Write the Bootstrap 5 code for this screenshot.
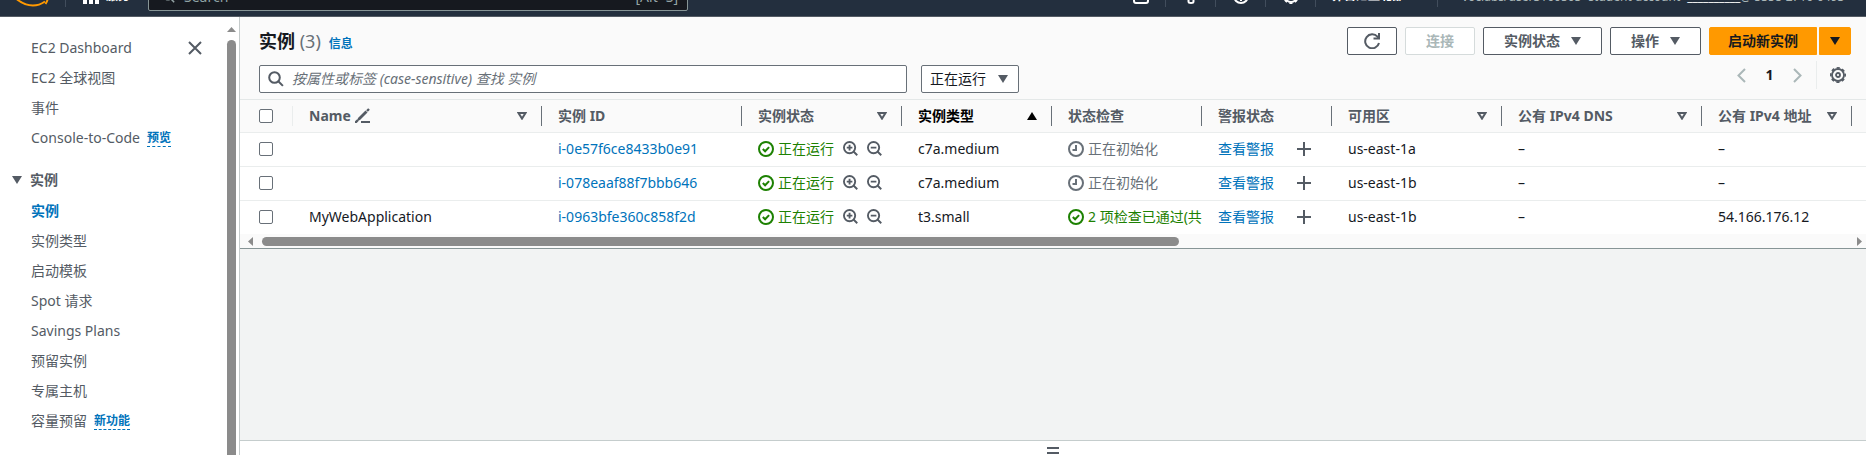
<!DOCTYPE html>
<html lang="zh-CN">
<head>
<meta charset="utf-8">
<meta name="viewport" content="width=device-width, initial-scale=1">
<title>实例 | EC2</title>
<link href="https://cdn.jsdelivr.net/npm/bootstrap@5.3.0/dist/css/bootstrap.min.css" rel="stylesheet">
<style>
:root{--ink:#16191f;--muted:#545b64;--soft:#687078;--blue:#0073bb;--line:#eaeded;--green:#1d8102}
body{font-family:"Noto Sans","Noto Sans CJK SC",sans-serif;font-size:14px;line-height:20px;color:var(--ink);background:#f2f3f3}
a{color:var(--blue);text-decoration:none}
svg{display:block;flex:none}
.topbar{height:17px;background:#232f3e;border-bottom:1px solid #545b64;color:#fff;font-size:12px;line-height:16px}
.topbar button,.bare{background:none;border:0;padding:0;color:inherit}
.tb-logo{width:65px;padding-left:16px;padding-bottom:9px;}
.tb-sep{width:1px;height:30px;background:#414d5c;margin-bottom:9px}
.tb-low{margin-bottom:12px}
.topbar .tb-serv{width:82px;padding-left:17px;gap:7px}
.tb-find{width:540px;height:28px;background:#16191f;border:1px solid #879596;border-radius:2px;margin-bottom:5px;padding:0 9px 0 14px;gap:9px;font-size:14px;color:#95a5a6}
.tb-find input{background:none;border:0;outline:0;color:inherit;min-width:0;padding:0}
.tb-find input::placeholder{color:#8fa3a5;opacity:1}
.tb-cell{width:49px}
.topbar .tb-region{width:121px;padding-left:16px;font-weight:700;text-align:left}
.topbar .tb-user{width:428px;padding-left:24px;margin-bottom:11px;color:#aab7b8}
.side{width:240px;background:#fff;border-right:1px solid #c5cbcb}
.side-nav{padding:16px 12px 0 0;color:var(--muted)}
.side-nav ul{margin:0}
.side-nav li{height:30px;padding-left:31px;display:flex;align-items:center;gap:7px}
.side-nav li a:first-child{color:var(--muted)}
.side-nav li a.now{color:var(--blue);font-weight:700}
.side-head{height:32px;padding-left:12px;gap:8px;margin-top:11px;font-weight:700;color:var(--muted)}
.side-nav .side-head{padding-left:12px}
.side-nav .tagline{font-size:12px;line-height:16px;font-weight:700;border-bottom:1px dashed var(--blue)}
.close-x{margin-left:auto;margin-right:13px}
.vbar{width:9px;margin-right:3px;padding-top:10px;gap:8px}
.grip{background:#8b8b8b;border-radius:5px}
.panel-top{background:#fafafa;padding:10px 15px 6px 19px}
.col-left{gap:10px}
.col-right{gap:6px}
.title-row{height:28px}
.title-text{font-size:18px;line-height:28px;font-weight:700;margin:0}
.title-text span{font-weight:400;color:var(--soft)}
.info-link{font-size:12px;font-weight:700}
.btn-aws{height:28px;padding:0 20px;border:1px solid var(--muted);border-radius:2px;background:#fff;color:var(--muted);font-size:14px;line-height:20px;font-weight:700;display:flex;align-items:center;justify-content:center;gap:11px}
.btn-aws:disabled{border-color:#d5dbdb;color:#aab7b8;background:#fff;opacity:1}
.btn-aws.hot{background:#f90;border-color:#f90;color:var(--ink);padding:0 18px}
.btn-aws.hot.tight{padding:0 10px}
.btn-aws.refresh{padding:0 16px}
.launch{gap:2px}
.filters{gap:14px}
.box{height:28px;background:#fff;border:1px solid var(--soft);border-radius:2px;padding:0 10px 0 8px}
.find{flex:0 1 648px;gap:8px}
.find input{border:0;outline:0;flex:1;min-width:0;padding:0;background:none}
.find input::placeholder{color:var(--soft);font-style:italic;opacity:1}
.pick{width:98px}
.pick select{appearance:none;border:0;background:none;outline:0;padding:0;flex:1;min-width:0;color:var(--ink)}
.pager{height:28px;color:#aab7b8}
.pager strong{color:var(--ink);width:47px;text-align:center}
.pager-sep{border-left:1px solid var(--line);margin-left:14px;padding-left:13px;padding-right:5px;height:28px;color:var(--muted)}
.grid-wrap{background:#fff;border-top:1px solid #e4e8e8}
.inst{table-layout:fixed;width:100%;margin:0;white-space:nowrap}
.inst th,.inst td{padding:0;overflow:hidden;vertical-align:middle;border-bottom:1px solid var(--line)}
.inst thead tr{height:32px;background:#fafafa;color:var(--muted)}
.inst tbody tr{height:34px}
.inst tbody tr:last-child td{border-bottom:0}
.inst td{padding-left:16px}
.inst td:first-child{padding-left:19px}
.hd{height:20px;padding-left:16px;padding-right:14px;border-right:1px solid var(--soft);gap:4px}
.hd.first{padding-left:19px;border-color:var(--line)}
.hd .sort{margin-left:auto}
.state{gap:9px}
.lens{margin-bottom:2px}
.alarm{gap:23px}
.cbx{appearance:none;width:14px;height:14px;border:1px solid var(--soft);border-radius:2px;background:#fff;margin:0;display:block}
.ok{color:var(--green)} .wait{color:var(--soft)} .ico{color:var(--muted)}
.c-check{width:53px}.c-name{width:249px}.c-200{width:200px}.c-160{width:160px}.c-150{width:150px}.c-130{width:130px}.c-170{width:170px}
.hbar{height:15px;background:#fafafa;border-bottom:1px solid #879596;padding:0 4px 0 8px;gap:9px}
.hbar .grip{height:9px}
.split{height:15px;background:#fff;border-top:1px solid #c5cdcd;padding-top:6px;gap:3px}
.split i{width:12px;height:2px;background:var(--muted)}
</style>
<script src="https://cdn.jsdelivr.net/npm/bootstrap@5.3.0/dist/js/bootstrap.bundle.min.js"></script>
</head>
<body class="vh-100 d-flex flex-column overflow-hidden">
<svg class="d-none">
  <symbol id="down" viewBox="0 0 10 8"><path d="M0 0h10L5 8z" fill="currentColor"/></symbol>
  <symbol id="up" viewBox="0 0 10 8"><path d="M0 8h10L5 0z" fill="currentColor"/></symbol>
  <symbol id="sort" viewBox="0 0 10 8"><path d="M1.5 1h7L5 6.6z" fill="none" stroke="currentColor" stroke-width="2"/></symbol>
  <symbol id="ok" viewBox="0 0 16 16"><g fill="none" stroke="currentColor" stroke-width="2"><circle cx="8" cy="8" r="7"/><path d="M4.8 8l2.3 2.3 4-4.2"/></g></symbol>
  <symbol id="wait" viewBox="0 0 16 16"><g fill="none" stroke="currentColor" stroke-width="2"><circle cx="8" cy="8" r="7"/><path d="M8 4v5H4.5"/></g></symbol>
  <symbol id="find" viewBox="0 0 16 16"><g fill="none" stroke="currentColor" stroke-width="2"><circle cx="6.5" cy="6.5" r="5.3"/><path d="M10.3 10.3l4.6 4.6"/></g></symbol>
  <symbol id="zin" viewBox="0 0 16 16"><g fill="none" stroke="currentColor" stroke-width="2"><circle cx="7" cy="7" r="6"/><path d="M11.2 11.2l4 4M4 7h6M7 4v6"/></g></symbol>
  <symbol id="zout" viewBox="0 0 16 16"><g fill="none" stroke="currentColor" stroke-width="2"><circle cx="7" cy="7" r="6"/><path d="M11.2 11.2l4 4M4 7h6"/></g></symbol>
  <symbol id="plus" viewBox="0 0 14 14"><path d="M7 0v14M0 7h14" stroke="currentColor" stroke-width="2"/></symbol>
  <symbol id="gear" viewBox="0 0 16 16"><g fill="none" stroke="currentColor"><circle cx="8" cy="8" r="6" stroke-width="1.8"/><circle cx="8" cy="8" r="7.2" stroke-width="1.6" stroke-dasharray="3.2 2.455" stroke-dashoffset="1.6"/><circle cx="8" cy="8" r="2" stroke-width="1.8"/></g></symbol>
</svg>

<header class="topbar d-flex align-items-end overflow-hidden flex-shrink-0">
  <a class="tb-logo" href="#" aria-label="AWS"><svg width="34" height="12" viewBox="0 0 34 12" fill="none" stroke="#f90" stroke-width="2"><path d="M1 4.5Q16 15.5 29 6.500"/><path d="M26 3.500q5-1.500 5.500 0T29.500 9"/></svg></a>
  <span class="tb-sep"></span>
  <button class="tb-serv tb-low d-flex align-items-end"><svg width="16" height="16" fill="#fff"><path d="M0 0h4v4H0zM6 0h4v4H6zM12 0h4v4h-4zM0 6h4v4H0zM6 6h4v4H6zM12 6h4v4h-4zM0 12h4v4H0zM6 12h4v4H6zM12 12h4v4h-4z"/></svg><b>服务</b></button>
  <label class="tb-find d-flex align-items-center"><svg width="12" height="12"><use href="#find"/></svg><input class="flex-grow-1" type="search" placeholder="Search" aria-label="Search"><span>[Alt+S]</span></label>
  <div class="d-flex align-items-end ms-auto">
    <button class="tb-cell tb-low d-flex justify-content-center" aria-label="CloudShell"><svg width="16" height="16" fill="none" stroke="#fff" stroke-width="2"><rect x="1" y="1" width="14" height="14" rx="2"/></svg></button><span class="tb-sep"></span>
    <button class="tb-cell tb-low d-flex justify-content-center" aria-label="通知"><svg width="16" height="16" fill="none" stroke="#fff" stroke-width="2"><path d="M2 11V6a6 6 0 0112 0v5M5.500 11v2.500q0 1.500 2.500 1.500t2.500-1.500V11M1 11h14"/></svg></button><span class="tb-sep"></span>
    <button class="tb-cell tb-low d-flex justify-content-center" aria-label="帮助"><svg width="16" height="16" fill="none" stroke="#fff" stroke-width="2"><circle cx="8" cy="8" r="7"/><path d="M8 6v3M8 11v2"/></svg></button><span class="tb-sep"></span>
    <button class="tb-cell tb-low d-flex justify-content-center" aria-label="设置"><svg width="16" height="16"><use href="#gear"/></svg></button><span class="tb-sep"></span>
    <button class="tb-region tb-low">弗吉尼亚北部</button><span class="tb-sep"></span>
    <button class="tb-user text-start text-nowrap">voclabs/user3160505=student-account=<span class="text-white">__________</span>@ 5358-2716-0493</button>
  </div>
</header>

<div class="d-flex flex-grow-1 overflow-hidden">
  <aside class="side d-flex flex-shrink-0 overflow-hidden">
    <nav class="side-nav flex-grow-1">
      <ul class="list-unstyled">
        <li><a href="#">EC2 Dashboard</a><button class="bare close-x" aria-label="关闭"><svg width="14" height="14" stroke="#545b64" stroke-width="2"><path d="M1 1l12 12M13 1L1 13"/></svg></button></li>
        <li><a href="#">EC2 全球视图</a></li>
        <li><a href="#">事件</a></li>
        <li><a href="#">Console-to-Code</a><a class="tagline" href="#">预览</a></li>
      </ul>
      <button class="bare side-head d-flex align-items-center"><svg width="10" height="8"><use href="#down"/></svg>实例</button>
      <ul class="list-unstyled">
        <li><a class="now" href="#">实例</a></li>
        <li><a href="#">实例类型</a></li>
        <li><a href="#">启动模板</a></li>
        <li><a href="#">Spot 请求</a></li>
        <li><a href="#">Savings Plans</a></li>
        <li><a href="#">预留实例</a></li>
        <li><a href="#">专属主机</a></li>
        <li><a href="#">容量预留</a><a class="tagline" href="#">新功能</a></li>
      </ul>
    </nav>
    <div class="vbar d-flex flex-column" aria-hidden="true"><svg width="9" height="5" fill="#8b8b8b"><path d="M0 5h9L4.500 0z"/></svg><div class="grip flex-grow-1 rounded-bottom-0"></div></div>
  </aside>

  <main class="d-flex flex-column flex-grow-1 overflow-hidden">
    <div class="panel-top d-flex justify-content-between">
      <div class="col-left d-flex flex-column flex-grow-1">
        <div class="title-row d-flex align-items-baseline gap-2"><h1 class="title-text">实例 <span>(3)</span></h1><a class="info-link" href="#">信息</a></div>
        <div class="filters d-flex">
          <label class="box find d-flex align-items-center"><svg class="ico" width="16" height="16"><use href="#find"/></svg><input type="search" placeholder="按属性或标签 (case-sensitive) 查找 实例" aria-label="查找实例"></label>
          <label class="box pick d-flex align-items-center"><select aria-label="状态"><option>正在运行</option></select><svg class="ico" width="10" height="8"><use href="#down"/></svg></label>
        </div>
      </div>
      <div class="col-right d-flex flex-column align-items-end flex-shrink-0">
        <div class="d-flex gap-2">
          <button class="btn-aws refresh" aria-label="刷新"><svg width="16" height="16" viewBox="0 0 16 16" fill="none" stroke="currentColor" stroke-width="2"><path d="M15 10A7 7 0 1 1 13.500 3.700L15 5.200"/><path d="M15 0v5.500H9.500"/></svg></button>
          <button class="btn-aws" disabled>连接</button>
          <button class="btn-aws">实例状态<svg width="10" height="8"><use href="#down"/></svg></button>
          <button class="btn-aws">操作<svg width="10" height="8"><use href="#down"/></svg></button>
          <div class="launch d-flex"><button class="btn-aws hot rounded-end-0">启动新实例</button><button class="btn-aws hot tight rounded-start-0" aria-label="更多启动选项"><svg width="10" height="8"><use href="#down"/></svg></button></div>
        </div>
        <div class="pager d-flex align-items-center">
          <button class="bare" aria-label="上一页"><svg width="9" height="15" fill="none" stroke="currentColor" stroke-width="2"><path d="M8 1L1.500 7.500 8 14"/></svg></button><strong>1</strong><button class="bare" aria-label="下一页"><svg width="9" height="15" fill="none" stroke="currentColor" stroke-width="2"><path d="M1 1l6.500 6.500L1 14"/></svg></button>
          <div class="pager-sep d-flex align-items-center"><button class="bare" aria-label="首选项"><svg width="16" height="16"><use href="#gear"/></svg></button></div>
        </div>
      </div>
    </div>

    <div class="grid-wrap">
      <table class="inst">
        <colgroup><col class="c-check"><col class="c-name"><col class="c-200"><col class="c-160"><col class="c-150"><col class="c-150"><col class="c-130"><col class="c-170"><col class="c-200"><col class="c-150"><col></colgroup>
        <thead><tr>
          <th><div class="hd first d-flex align-items-center"><input class="cbx" type="checkbox" aria-label="全选"></div></th>
          <th><div class="hd d-flex align-items-center">Name <svg class="ico" width="15" height="15" viewBox="0 0 15 15"><path d="M2 13L3 10 10.500 2.500 12.500 4.500 5 12z" fill="currentColor"/><path d="M12 3l2-2M0 15l3-3" stroke="currentColor" stroke-width="2.400"/><path d="M6 14h9" stroke="currentColor" stroke-width="2"/></svg><svg class="sort" width="10" height="8"><use href="#sort"/></svg></div></th>
          <th><div class="hd">实例 ID</div></th>
          <th><div class="hd d-flex align-items-center">实例状态<svg class="sort" width="10" height="8"><use href="#sort"/></svg></div></th>
          <th><div class="hd d-flex align-items-center text-black">实例类型<svg class="sort" width="10" height="8"><use href="#up"/></svg></div></th>
          <th><div class="hd">状态检查</div></th>
          <th><div class="hd">警报状态</div></th>
          <th><div class="hd d-flex align-items-center">可用区<svg class="sort" width="10" height="8"><use href="#sort"/></svg></div></th>
          <th><div class="hd d-flex align-items-center">公有 IPv4 DNS<svg class="sort" width="10" height="8"><use href="#sort"/></svg></div></th>
          <th><div class="hd d-flex align-items-center">公有 IPv4 地址<svg class="sort" width="10" height="8"><use href="#sort"/></svg></div></th>
          <th></th>
        </tr></thead>
        <tbody id="rows"></tbody>
      </table>
      <div class="hbar d-flex align-items-center" aria-hidden="true"><svg width="5" height="9" fill="#8b8b8b"><path d="M5 0v9L0 4.500z"/></svg><div class="flex-grow-1"><div class="grip" style="width:57.8%"></div></div><svg width="5" height="9" fill="#8b8b8b"><path d="M0 0v9l5-4.500z"/></svg></div>
    </div>

    <div class="split mt-auto d-flex flex-column align-items-center"><i></i><i></i></div>
  </main>
</div>
<script>
const icon = (id, w = 16, h = w) => `<svg width="${w}" height="${h}"><use href="#${id}"/></svg>`;
const instances = [
  ['', 'i-0e57f6ce8433b0e91', 'c7a.medium', false, 'us-east-1a', '–'],
  ['', 'i-078eaaf88f7bbb646', 'c7a.medium', false, 'us-east-1b', '–'],
  ['MyWebApplication', 'i-0963bfe360c858f2d', 't3.small', true, 'us-east-1b', '54.166.176.12']
];
document.getElementById('rows').innerHTML = instances.map(([name, id, type, passed, zone, ip]) => `<tr>
  <td><input class="cbx" type="checkbox" aria-label="选择 ${id}"></td>
  <td>${name}</td>
  <td><a href="#">${id}</a></td>
  <td><div class="state d-flex align-items-center"><span class="ok d-flex align-items-center gap-1">${icon('ok')}正在运行</span><button class="bare ico lens" aria-label="包含">${icon('zin', 15)}</button><button class="bare ico lens" aria-label="排除">${icon('zout', 15)}</button></div></td>
  <td>${type}</td>
  <td><div class="d-flex align-items-center gap-1 overflow-hidden ${passed ? 'ok' : 'wait'}">${icon(passed ? 'ok' : 'wait')}${passed ? '2 项检查已通过(共' : '正在初始化'}</div></td>
  <td><div class="alarm d-flex align-items-center"><a href="#">查看警报</a><button class="bare ico" aria-label="创建警报">${icon('plus', 14)}</button></div></td>
  <td>${zone}</td><td>–</td><td>${ip}</td><td></td>
</tr>`).join('');
</script>
</body>
</html>
